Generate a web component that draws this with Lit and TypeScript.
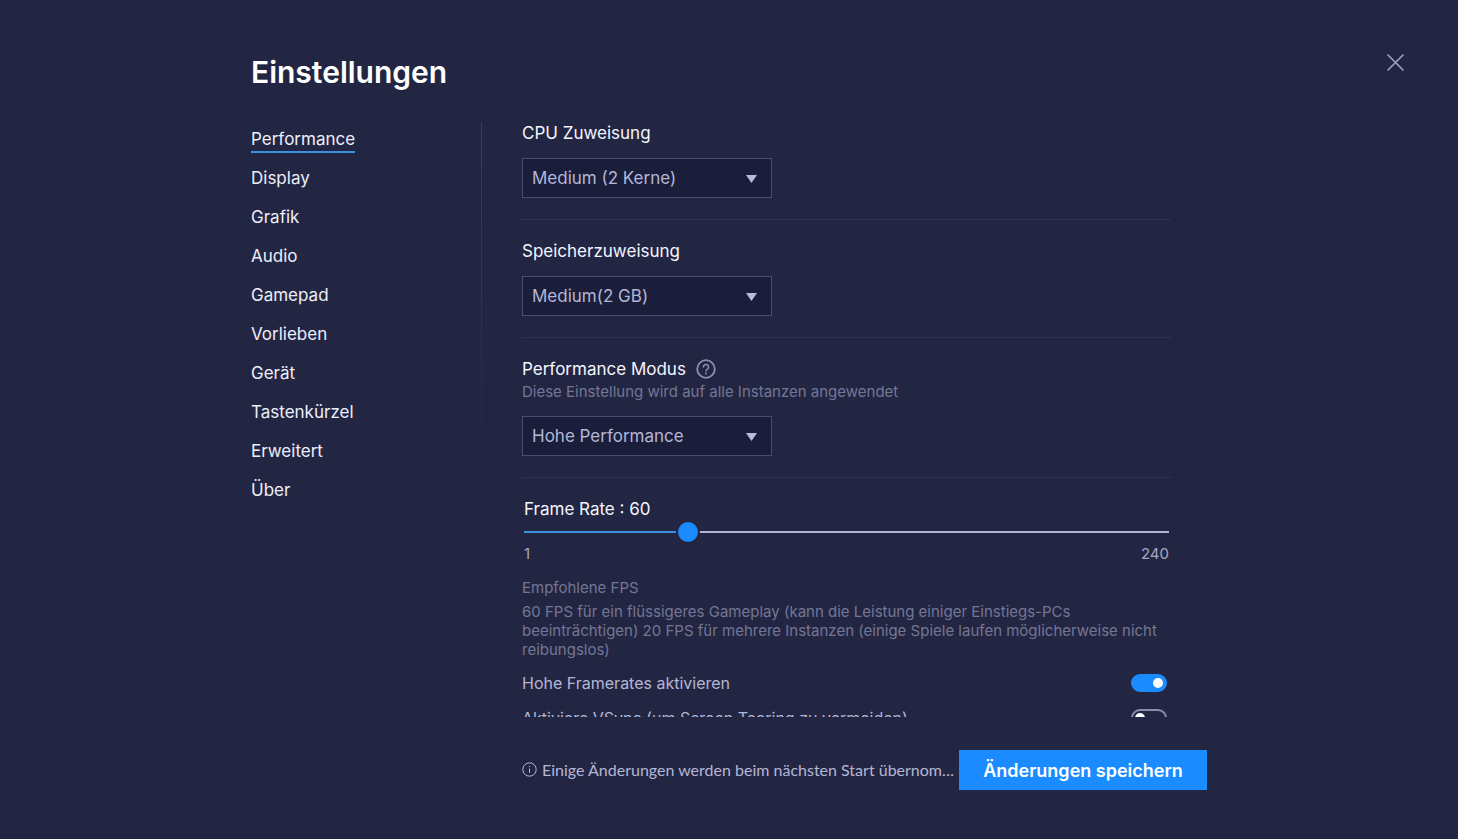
import { LitElement, html, css } from "lit";
import { customElement, property, state } from "lit/decorators.js";
import { classMap } from "lit/directives/class-map.js";
import { styleMap } from "lit/directives/style-map.js";

@customElement("select-field")
class SelectField extends LitElement {
  @property() label = "";
  @property() note = "";
  @property({ type: Boolean }) help = false;
  @property({ attribute: false }) options: string[] = [];

  static styles = css`
    :host {
      display: block;
      padding-bottom: 21px;
      border-bottom: 1px solid #2f3250;
      margin-bottom: 20px;
    }
    .head {
      display: flex;
      align-items: center;
      gap: 10px;
      height: 22px;
    }
    .label {
      font-size: 17px;
      line-height: 22px;
      color: #f4f5ff;
    }
    .help {
      display: flex;
      padding: 0;
      border: 0;
      background: none;
      color: #8c8eb0;
      cursor: pointer;
    }
    .note {
      margin: 2px 0 0;
      font-size: 15px;
      line-height: 20px;
      color: #747696;
    }
    .box {
      display: grid;
      align-items: center;
      width: 250px;
      max-width: 100%;
      margin-top: 14px;
    }
    .select {
      grid-area: 1 / 1;
      width: 100%;
      height: 40px;
      padding: 0 36px 0 9px;
      border: 1px solid #4a4d6c;
      border-radius: 0;
      background: #1b1e3a;
      color: #b4b6d6;
      font: inherit;
      font-size: 17px;
      appearance: none;
      cursor: pointer;
    }
    .arrow {
      grid-area: 1 / 1;
      justify-self: end;
      margin: 2px 15px 0 0;
      pointer-events: none;
      fill: #b9bbdc;
    }
  `;

  render() {
    return html`
      <div class="head">
        <label class="label" for="choice">${this.label}</label>
        ${this.help
          ? html`<button class="help" type="button" aria-label="Hilfe">
              <svg width="20" height="20" viewBox="0 0 20 20" fill="none" stroke="currentColor" stroke-width="1.8" stroke-linecap="round">
                <circle cx="10" cy="10" r="8.8" />
                <path d="M7.4 8a2.6 2.6 0 1 1 4 2.2c-1 .6-1.4 1-1.4 1.9" stroke-width="1.5" />
                <circle cx="10" cy="14.6" r="1" fill="currentColor" stroke="none" />
              </svg>
            </button>`
          : ""}
      </div>
      ${this.note ? html`<p class="note">${this.note}</p>` : ""}
      <div class="box">
        <select class="select" id="choice">
          ${this.options.map((o) => html`<option>${o}</option>`)}
        </select>
        <svg class="arrow" width="11" height="8" viewBox="0 0 11 8"><path d="M0 0h11L5.5 8z" /></svg>
      </div>
    `;
  }
}

@customElement("toggle-row")
class ToggleRow extends LitElement {
  @property() label = "";
  @property({ type: Boolean }) on = false;

  static styles = css`
    :host {
      display: block;
    }
    .row {
      display: flex;
      align-items: center;
      justify-content: space-between;
      padding-right: 4px;
      font-size: 16px;
      line-height: 20px;
      color: #b4b6d6;
    }
    .switch {
      display: flex;
      align-items: center;
      box-sizing: border-box;
      width: 36px;
      height: 18px;
      margin: 0;
      padding: 0 2px;
      border: 2px solid #8c8eb0;
      border-radius: 9px;
      appearance: none;
      cursor: pointer;
    }
    .switch::before {
      content: "";
      width: 10px;
      height: 10px;
      border-radius: 50%;
      background: #fff;
    }
    .switch:checked {
      justify-content: flex-end;
      border-color: #1a8cff;
      background: #1a8cff;
    }
  `;

  render() {
    return html`
      <div class="row">
        <label for="switch">${this.label}</label>
        <input class="switch" id="switch" type="checkbox" .checked=${this.on} />
      </div>
    `;
  }
}

@customElement("app-root")
class AppRoot extends LitElement {
  @state() private page = "Performance";
  @state() private fps = 60;

  private pages = [
    "Performance",
    "Display",
    "Grafik",
    "Audio",
    "Gamepad",
    "Vorlieben",
    "Gerät",
    "Tastenkürzel",
    "Erweitert",
    "Über",
  ];

  static styles = css`
    :host {
      display: grid;
      grid-template-columns: minmax(48px, 1fr) minmax(0, 956px) minmax(48px, 1fr);
      grid-template-rows: auto minmax(0, 1fr) auto;
      box-sizing: border-box;
      height: 100vh;
      padding: 46px 0 49px;
      background: #232642;
      color: #f4f5ff;
      font-family: Inter, Roboto, sans-serif;
    }
    .title {
      grid-column: 2;
      margin: 7px 0 31px;
      font-size: 30px;
      line-height: 38px;
      font-weight: 600;
      color: #fff;
    }
    .close {
      grid-column: 3;
      justify-self: end;
      align-self: start;
      display: flex;
      padding: 8px;
      margin-right: 46px;
      border: 0;
      background: none;
      color: #9c9ebf;
      cursor: pointer;
    }
    .body {
      grid-column: 2;
      display: grid;
      grid-template-columns: 230px 1px minmax(0, 1fr);
    }
    .nav {
      display: flex;
      flex-direction: column;
      align-items: flex-start;
      gap: 14px;
      padding-top: 6px;
    }
    .link {
      border-bottom: 2px solid transparent;
      font-size: 17px;
      line-height: 23px;
      color: #eceefc;
      text-decoration: none;
    }
    .active {
      border-color: #3d8fe0;
    }
    .rule {
      height: 60%;
      background: linear-gradient(#3a3d5c, #2f3250 50%, #232642);
    }
    .content {
      overflow-y: auto;
      scrollbar-width: none;
      padding: 0 36px 0 40px;
    }
    .rate {
      padding: 0 2px;
    }
    .rate-label {
      display: block;
      font-size: 17px;
      line-height: 22px;
    }
    .slider {
      display: block;
      width: 100%;
      height: 20px;
      margin: 2px 0 0;
      appearance: none;
      background: linear-gradient(#3d8fe0, #3d8fe0) left center / var(--fill) 2px no-repeat,
        linear-gradient(#b4b6d6, #b4b6d6) center / 100% 2px no-repeat;
      cursor: pointer;
    }
    .slider::-webkit-slider-thumb {
      width: 20px;
      height: 20px;
      border-radius: 50%;
      background: #1a8cff;
      box-shadow: 0 0 0 2px #232642;
      appearance: none;
    }
    .limits {
      display: flex;
      justify-content: space-between;
      margin-top: 2px;
      font-size: 15px;
      line-height: 19px;
      color: #a4a6c6;
    }
    .hint {
      margin: 0;
      font-size: 15px;
      line-height: 19px;
      color: #747696;
    }
    .hints {
      display: grid;
      gap: 5px;
      margin: 15px 0 14px;
    }
    .toggles {
      display: grid;
      gap: 15px;
      padding-bottom: 20px;
    }
    .footer {
      grid-column: 2;
      display: flex;
      align-items: center;
      gap: 4px;
      margin: 33px 0 0 271px;
      color: #b4b6d6;
    }
    .info {
      flex: none;
    }
    .message {
      flex: 1;
      min-width: 0;
      overflow: hidden;
      font-family: Lato, Inter, sans-serif;
      font-size: 16px;
      line-height: 20px;
      white-space: nowrap;
      text-overflow: ellipsis;
    }
    .save {
      flex: none;
      width: 248px;
      height: 40px;
      border: 0;
      background: #1a8cff;
      color: #fff;
      font: inherit;
      font-size: 18px;
      font-weight: 600;
      cursor: pointer;
    }
  `;

  private renderNav() {
    return this.pages.map(
      (p) => html`<a
        class=${classMap({ link: true, active: p === this.page })}
        href="#${p}"
        @click=${() => (this.page = p)}
        >${p}</a
      >`
    );
  }

  render() {
    const share = (this.fps - 1) / 239;
    const fill = { "--fill": `${share * 100}%` };
    return html`
      <h1 class="title">Einstellungen</h1>
      <button class="close" type="button" aria-label="Schließen">
        <svg width="17" height="17" viewBox="0 0 17 17" fill="none" stroke="currentColor" stroke-width="1.7" stroke-linecap="round">
          <path d="M1 1l15 15M16 1L1 16" />
        </svg>
      </button>
      <div class="body">
        <nav class="nav">${this.renderNav()}</nav>
        <div class="rule"></div>
        <main class="content">
          <select-field label="CPU Zuweisung" .options=${["Medium (2 Kerne)"]}></select-field>
          <select-field label="Speicherzuweisung" .options=${["Medium(2 GB)"]}></select-field>
          <select-field
            label="Performance Modus"
            note="Diese Einstellung wird auf alle Instanzen angewendet"
            help
            .options=${["Hohe Performance"]}
          ></select-field>
          <section class="rate">
            <label class="rate-label" for="fps">Frame Rate : ${this.fps}</label>
            <input
              class="slider"
              id="fps"
              type="range"
              min="1"
              max="240"
              .value=${String(this.fps)}
              style=${styleMap(fill)}
              @input=${(e: Event) => (this.fps = Number((e.target as HTMLInputElement).value))}
            />
            <div class="limits"><span>1</span><span>240</span></div>
          </section>
          <div class="hints">
            <p class="hint">Empfohlene FPS</p>
            <p class="hint">
              60 FPS für ein flüssigeres Gameplay (kann die Leistung einiger Einstiegs-PCs beeinträchtigen) 20 FPS für
              mehrere Instanzen (einige Spiele laufen möglicherweise nicht reibungslos)
            </p>
          </div>
          <div class="toggles">
            <toggle-row label="Hohe Framerates aktivieren" on></toggle-row>
            <toggle-row label="Aktiviere VSync (um Screen Tearing zu vermeiden)"></toggle-row>
          </div>
        </main>
      </div>
      <footer class="footer">
        <svg class="info" width="16" height="16" viewBox="0 0 16 16" fill="none" stroke="currentColor">
          <circle cx="7.5" cy="7.5" r="6.7" />
          <path d="M7.5 6.6v4.2" />
          <circle cx="7.5" cy="4.6" r=".7" fill="currentColor" stroke="none" />
        </svg>
        <span class="message">Einige Änderungen werden beim nächsten Start übernommen</span>
        <button class="save" type="button">Änderungen speichern</button>
      </footer>
    `;
  }
}
